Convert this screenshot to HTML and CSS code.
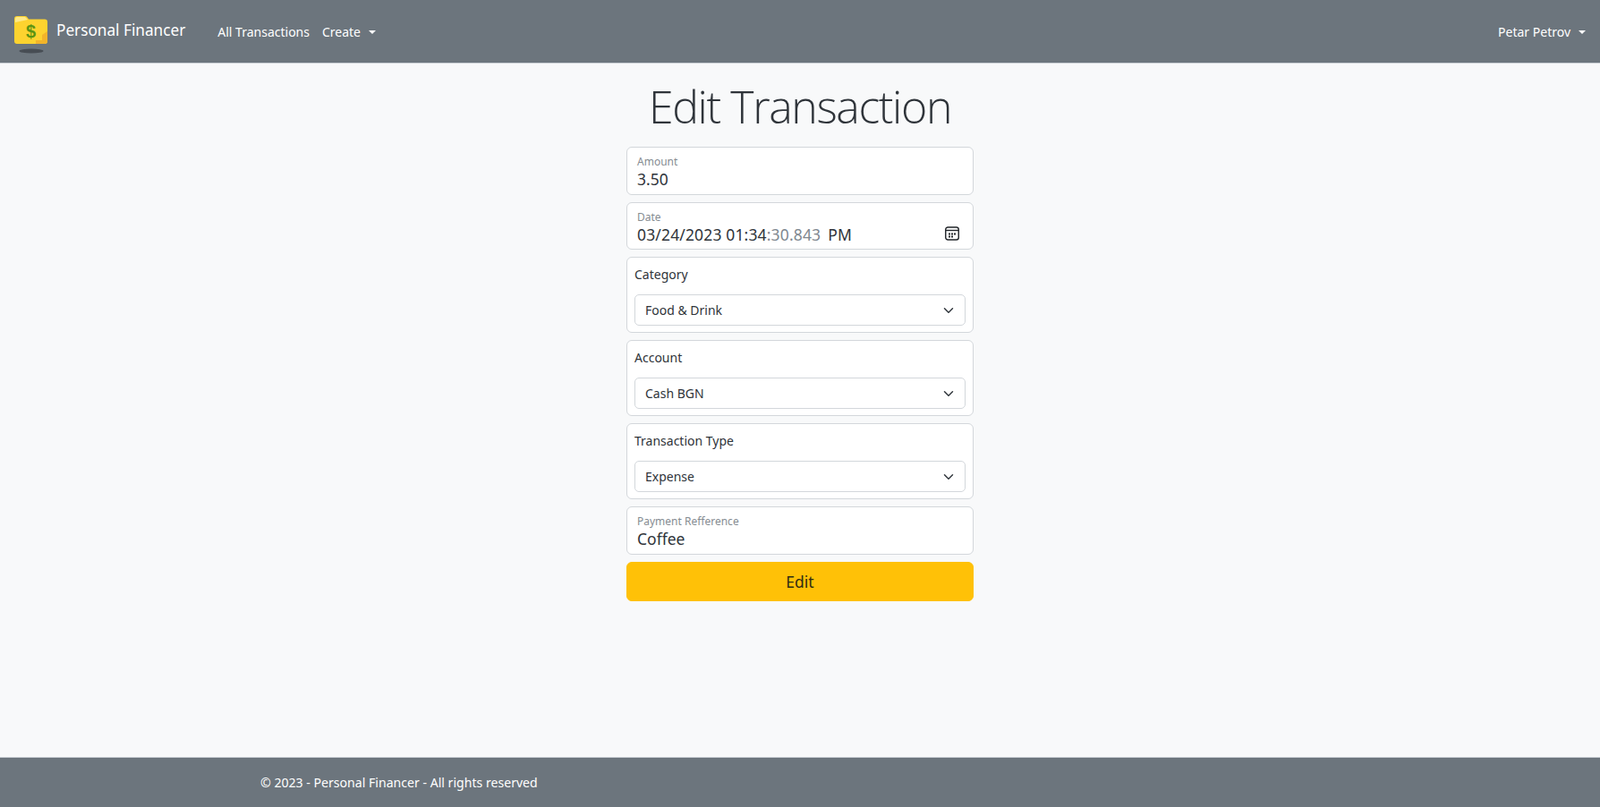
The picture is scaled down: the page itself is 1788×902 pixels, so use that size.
FILE: index.html
```html
<!DOCTYPE html>
<html lang="en">
<head>
    <meta charset="UTF-8">
    <meta name="viewport" content="width=device-width, initial-scale=1.0">
    <title>Edit Transaction - Personal Financer</title>
    <link rel="stylesheet" href="styles.css">
</head>
<body>
    <header class="navbar">
        <a class="brand" href="#">
            <svg class="brand-logo" width="38" height="44" viewBox="0 0 38 44">
                <ellipse cx="19" cy="40" rx="13.500" ry="2.500" fill="#474d54"/>
                <path d="M0 4 Q0 1 3 1 H12 Q14 1 15 3 L16 4.500 H34 Q37 4.500 37 7.500 V29 Q37 32 34 32 H3 Q0 32 0 29 Z" fill="#fdd32f"/>
                <path d="M1 8 V4 Q1 2 3 2 H12 L15 5 Z" fill="#fee98a"/>
                <path d="M37 18 V29 Q37 32 34 32 H24 V28 H31 V22 Z" fill="#f2b42a"/>
                <text class="brand-dollar" x="18.500" y="24.500" text-anchor="middle">$</text>
            </svg>
            <span class="brand-name">Personal Financer</span>
        </a>
        <nav class="nav-links">
            <a href="#">All Transactions</a>
            <a href="#" class="caret">Create</a>
        </nav>
        <a href="#" class="caret nav-user">Petar Petrov</a>
    </header>

    <main class="page">
        <h1>Edit Transaction</h1>
        <form class="edit-form">
            <label class="field">
                <span class="field-label">Amount</span>
                <input class="field-input" type="text" value="3.50">
            </label>
            <div class="field">
                <span class="field-label">Date</span>
                <div class="field-input date-value">
                    <span class="date-text">03/24/2023 01:34<span class="dim">:30.843</span><span class="ampm">PM</span></span>
                    <svg class="calendar" width="16" height="16" viewBox="0 0 16 16">
                        <rect x="0.750" y="1" width="14.500" height="14" rx="2.500" fill="none" stroke="#212529" stroke-width="1.400"/>
                        <path d="M1 4.500 H15" stroke="#212529" stroke-width="1.400"/>
                        <path d="M4 7.500 h2 v2 h-2 Z M7 7.500 h2 v2 h-2 Z M10 7.500 h2 v2 h-2 Z M4 10.500 h2 v2 h-2 Z M7 10.500 h2 v2 h-2 Z" fill="#212529"/>
                    </svg>
                </div>
            </div>
            <div class="select-group">
                <label for="category">Category</label>
                <select id="category"><option>Food &amp; Drink</option></select>
            </div>
            <div class="select-group">
                <label for="account">Account</label>
                <select id="account"><option>Cash BGN</option></select>
            </div>
            <div class="select-group">
                <label for="type">Transaction Type</label>
                <select id="type"><option>Expense</option></select>
            </div>
            <label class="field">
                <span class="field-label">Payment Refference</span>
                <input class="field-input" type="text" value="Coffee">
            </label>
            <button type="submit" class="edit-button">Edit</button>
        </form>
    </main>

    <footer class="footer">
        <div class="footer-text">&copy; 2023 - Personal Financer - All rights reserved</div>
    </footer>
</body>
</html>
```

FILE: styles.css
```css
/* General Styles */
* {
    box-sizing: border-box;
}
body {
    margin: 0;
    min-height: 100vh;
    display: flex;
    flex-direction: column;
    background: #f8f9fa;
    color: #2f343a;
    font-family: 'Noto Sans', sans-serif;
    font-size: 14px;
}
a {
    color: inherit;
    text-decoration: none;
}

/* Navbar */
.navbar {
    height: 71px;
    display: flex;
    align-items: center;
    padding: 0 16px;
    background: #6c757d;
    color: #fff;
    border-bottom: 1px solid #c9ced3;
}
.brand {
    display: flex;
    align-items: center;
    gap: 9px;
    margin-right: 36px;
}
.brand-logo {
    margin-top: 8px;
}
.brand-dollar {
    font-family: 'Liberation Sans', sans-serif;
    font-size: 20px;
    font-weight: 700;
    fill: #5c9412;
}
.brand-name {
    font-size: 17.200px;
    margin-top: -4px;
}
.nav-links {
    display: flex;
    gap: 14px;
}
.nav-links a,
.nav-user {
    font-size: 14px;
}
.caret::after {
    content: "";
    display: inline-block;
    margin-left: 9px;
    vertical-align: 3px;
    border-top: 4.500px solid;
    border-left: 4.500px solid transparent;
    border-right: 4.500px solid transparent;
}
.nav-user {
    margin-left: auto;
}

/* Form */
.page {
    flex: 1;
    display: flex;
    flex-direction: column;
    align-items: center;
}
h1 {
    margin: 12px 0 8px;
    font-family: 'Open Sans', sans-serif;
    font-size: 50px;
    font-weight: 300;
    letter-spacing: -1.400px;
    line-height: 73px;
}
.edit-form {
    width: 388px;
    display: flex;
    flex-direction: column;
    gap: 8px;
}
.field {
    display: block;
    height: 53.500px;
    padding: 8px 11px 0;
    background: #fff;
    border: 1px solid #d3d7db;
    border-radius: 6px;
}
.field-label {
    display: block;
    font-size: 12px;
    line-height: 15px;
    color: #868c92;
}
.field-input {
    display: block;
    width: 100%;
    padding: 0;
    border: none;
    outline: none;
    font-family: inherit;
    font-size: 17.500px;
    line-height: 24px;
    color: #2f343a;
    background: transparent;
}
.date-value {
    display: flex;
    align-items: center;
    justify-content: space-between;
    padding-right: 4px;
}
.date-text {
    letter-spacing: 0.150px;
}
.calendar {
    margin-bottom: 2px;
}
.dim {
    color: #808890;
}
.ampm {
    margin-left: 8px;
    color: #2f343a;
}
.select-group {
    height: 85px;
    padding: 7px 8px 0;
    background: #fff;
    border: 1px solid #d3d7db;
    border-radius: 6px;
}
.select-group label {
    display: block;
    font-size: 14px;
    line-height: 24px;
    margin-bottom: 10px;
}
.select-group select {
    display: block;
    width: 100%;
    height: 35px;
    padding: 0 36px 0 11px;
    appearance: none;
    font-family: inherit;
    font-size: 14px;
    color: #2f343a;
    background: #fff url("data:image/svg+xml,%3csvg xmlns='http://www.w3.org/2000/svg' viewBox='0 0 16 16'%3e%3cpath fill='none' stroke='%23343a40' stroke-linecap='round' stroke-linejoin='round' stroke-width='2' d='m2 5 6 6 6-6'/%3e%3c/svg%3e") no-repeat right 12px center / 12px 12px;
    border: 1px solid #d3d7db;
    border-radius: 5px;
}
.edit-button {
    height: 44.500px;
    background: #ffc107;
    border: 1px solid #ffc107;
    border-radius: 6px;
    font-family: inherit;
    font-size: 17.500px;
    color: #2f2c14;
}

/* Footer */
.footer {
    height: 56px;
    display: flex;
    align-items: center;
    padding-left: 291px;
    background: #6c757d;
    color: #fff;
    border-top: 1px solid #c9ced3;
}
.footer-text {
    font-size: 14.100px;
}
```
